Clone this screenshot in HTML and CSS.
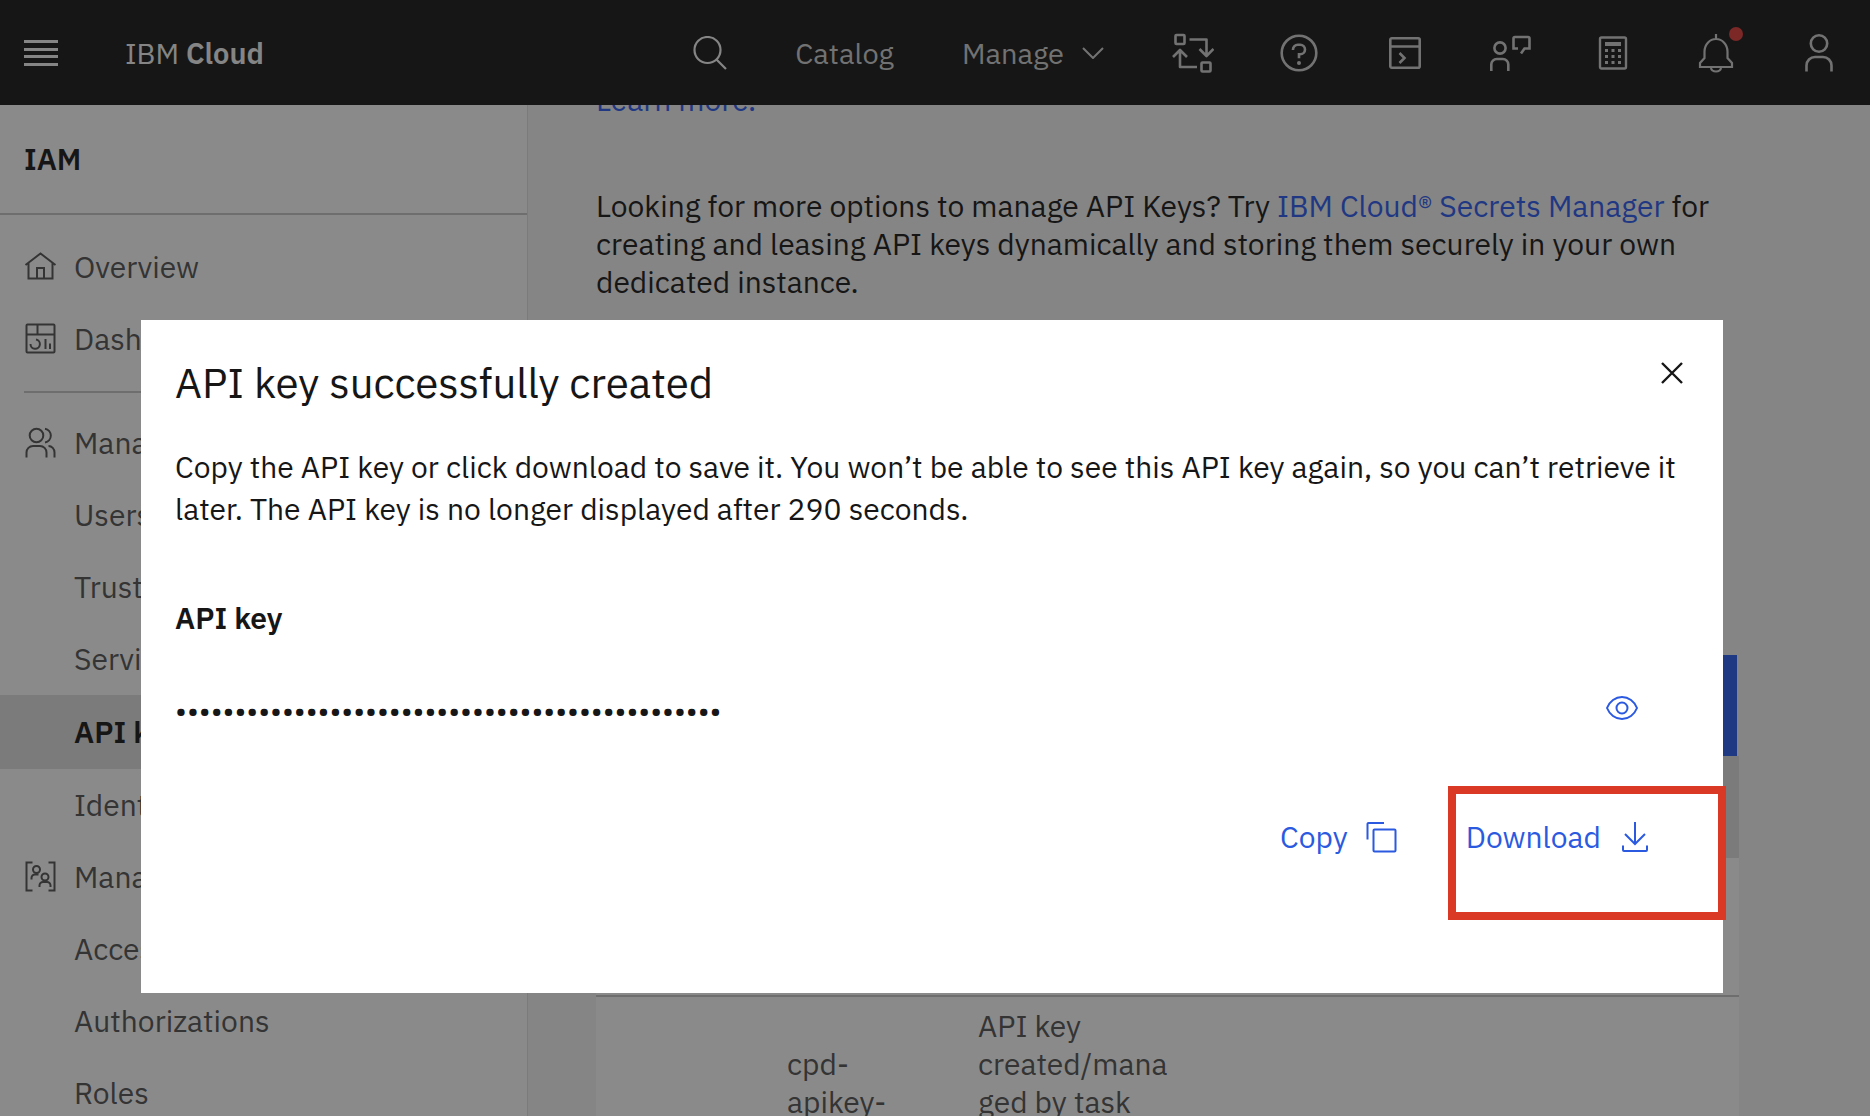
FILE: index.html
```html
<!DOCTYPE html>
<html lang="en">
<head>
  <meta charset="utf-8">
  <meta name="viewport" content="width=device-width, initial-scale=1">
  <title>IBM Cloud - API keys</title>
  <link rel="stylesheet" href="styles.css">
</head>
<body>
  <header class="topbar">
    <button class="menu-button" type="button" aria-label="Menu">
      <svg width="34" height="28" viewBox="0 0 34 28" fill="currentColor"><path d="M0 1h34v3H0zM0 9h34v3H0zM0 16h34v3H0zM0 24h34v3H0z"/></svg>
    </button>
    <a class="brand" href="#">IBM <b>Cloud</b></a>
    <nav class="topnav" aria-label="Main">
      <button class="search-button" type="button" aria-label="Search">
        <svg width="34" height="34" viewBox="0 0 34 34" fill="none" stroke="currentColor" stroke-width="2.200"><circle cx="14.500" cy="14" r="13"/><path d="M23.500 23.500 33 33"/></svg>
      </button>
      <a class="catalog" href="#">Catalog</a>
      <button class="manage" type="button">Manage
        <svg width="22" height="12" viewBox="0 0 22 12" fill="none" stroke="currentColor" stroke-width="2"><path d="M1 1l10 10L21 1"/></svg>
      </button>
    </nav>
    <div class="tools">
      <button class="tool wide" type="button" aria-label="Switch account">
        <svg width="42" height="40" viewBox="0 0 42 40" fill="none" stroke="currentColor" stroke-width="2.600" stroke-linejoin="round"><rect x="3.500" y="2" width="9" height="9" rx="1"/><rect x="29.500" y="29.500" width="9" height="9" rx="1"/><path d="M17.500 6.500h17v16M27.500 16l7 7 7-7M25 34H8V17.500M1 24l7-7 7 7"/></svg>
      </button>
      <button class="tool wide" type="button" aria-label="Help">
        <svg width="38" height="38" viewBox="0 0 38 38" fill="none" stroke="currentColor" stroke-width="2.600"><circle cx="19" cy="19" r="17.300"/><path d="M13 16v-.500a4.800 4.800 0 0 1 4.800-4.800h2.400a4.800 4.800 0 0 1 0 9.600H19v4"/><circle cx="19" cy="29" r="2" fill="currentColor" stroke="none"/></svg>
      </button>
      <button class="tool wide" type="button" aria-label="Cloud Shell">
        <svg width="34" height="34" viewBox="0 0 34 34" fill="none" stroke="currentColor" stroke-width="2.600"><rect x="2.300" y="2.300" width="29.400" height="29.400" rx="1.500"/><path d="M2 10.500h30M11.500 17l5 5-5 5"/></svg>
      </button>
      <button class="tool" type="button" aria-label="Feedback">
        <svg width="42" height="38" viewBox="0 0 42 38" fill="none" stroke="currentColor" stroke-width="2.600"><circle cx="11" cy="14" r="5.600"/><path d="M2.300 37v-6.500a5.500 5.500 0 0 1 5.500-5.500h6a5.500 5.500 0 0 1 5.500 5.500V37M29 14.500h-4.500V4.500a1.500 1.500 0 0 1 1.500-1.500h13a1.500 1.500 0 0 1 1.500 1.500v10h-5l-3.500 5"/></svg>
      </button>
      <button class="tool" type="button" aria-label="Cost estimator">
        <svg width="30" height="34" viewBox="0 0 30 34" fill="none" stroke="currentColor" stroke-width="2.400"><rect x="2" y="1.500" width="26" height="31" rx="1.500"/><path fill="currentColor" stroke="none" d="M7 6h16v4H7zM7 13h3v3H7zM13.500 13h3v3h-3zM20 13h3v3h-3zM7 19h3v3H7zM13.500 19h3v3h-3zM20 19h3v3h-3zM7 25h3v3H7zM13.500 25h3v3h-3zM20 25h3v3h-3z"/></svg>
      </button>
      <button class="tool" type="button" aria-label="Notifications">
        <svg width="36" height="40" viewBox="0 0 36 40" fill="none" stroke="currentColor" stroke-width="2.200"><path d="M18 1v5M6.500 18.500a11.500 12.500 0 0 1 23 0v6.500l4.500 5v4H2v-4l4.500-5zM13 34.500a5 4 0 0 0 10 0"/></svg>
        <span class="unread"></span>
      </button>
      <button class="tool" type="button" aria-label="Profile">
        <svg width="30" height="40" viewBox="0 0 30 40" fill="none" stroke="currentColor" stroke-width="2.600"><circle cx="15" cy="10.500" r="8.200"/><path d="M2.500 38.500v-6a8.500 8.500 0 0 1 8.500-8.500h8a8.500 8.500 0 0 1 8.500 8.500v6"/></svg>
      </button>
    </div>
  </header>

  <div class="shell">
    <aside class="sidebar">
      <h2 class="sidebar-title">IAM</h2>
      <nav class="sidenav" aria-label="IAM">
        <a class="item" href="#">
          <svg class="item-icon" viewBox="0 0 34 34" fill="none" stroke="currentColor" stroke-width="2"><path d="M1.500 15 16.500 3.500l15 11.500M4.500 13v15.500h24V13M13 28.500V18h7v10.500"/></svg>
          Overview</a>
        <a class="item" href="#">
          <svg class="item-icon" viewBox="0 0 34 34" fill="none" stroke="currentColor" stroke-width="2"><rect x="2.500" y="2.500" width="28" height="28" rx="1"/><path d="M2.500 12.500h28M13.500 2.500v10M21.500 17v10M26 21.500v5.500M12 17.500a4.700 4.700 0 1 1-5.500 4.500"/></svg>
          Dashboard</a>
        <hr class="divider">
        <a class="item" href="#">
          <svg class="item-icon" viewBox="0 0 34 34" fill="none" stroke="currentColor" stroke-width="2"><circle cx="12.500" cy="9.500" r="6.800"/><path d="M2.500 31.500v-5a6.500 6.500 0 0 1 6.500-6.500h7a6.500 6.500 0 0 1 6.500 6.500v5M21 2.700a7 7 0 0 1 0 13.800M24.500 20a6 6.500 0 0 1 6 6.500v5"/></svg>
          Manage identities</a>
        <a class="item sub" href="#">Users</a>
        <a class="item sub" href="#">Trusted profiles</a>
        <a class="item sub" href="#">Service IDs</a>
        <a class="item sub current" href="#" aria-current="page">API keys</a>
        <a class="item sub" href="#">Identity providers</a>
        <a class="item" href="#">
          <svg class="item-icon" viewBox="0 0 34 34" fill="none" stroke="currentColor" stroke-width="2"><path d="M8.500 2.500h-6v28h6M24.500 2.500h6v28h-6M7.500 19.500V18a3.500 3.500 0 0 1 3.500-3.500h3.500M15.500 27v-1.500A3.500 3.500 0 0 1 19 22h4a3.500 3.500 0 0 1 3.500 3.500V27"/><circle cx="12.500" cy="9.500" r="3.500"/><circle cx="21" cy="17" r="3.500"/></svg>
          Manage access</a>
        <a class="item sub" href="#">Access groups</a>
        <a class="item sub" href="#">Authorizations</a>
        <a class="item sub" href="#">Roles</a>
      </nav>
    </aside>

    <main class="content">
      <p class="intro"><a href="#">Learn more.</a></p>
      <p class="intro">Looking for more options to manage API Keys? Try <a href="#">IBM Cloud® Secrets Manager</a> for creating and leasing API keys dynamically and storing them securely in your own dedicated instance.</p>
      <div class="toolbar"><button class="create" type="button" aria-label="Create"></button></div>
      <table class="keys">
        <colgroup><col class="col"><col class="col"><col class="col"><col></colgroup>
        <thead><tr><th></th><th></th><th></th><th></th></tr></thead>
        <tbody>
          <tr class="first"><td></td><td></td><td></td><td></td></tr>
          <tr><td></td><td class="name">cpd-<br>apikey-</td><td>API key<br>created/mana<br>ged by task</td><td></td></tr>
        </tbody>
      </table>
    </main>
  </div>

  <div class="overlay">
    <section class="dialog" role="dialog" aria-modal="true" aria-labelledby="dialog-title">
      <div class="dialog-head">
        <h1 class="dialog-title" id="dialog-title">API key successfully created</h1>
        <button class="close" type="button" aria-label="Close">
          <svg width="22" height="22" viewBox="0 0 22 22" fill="none" stroke="currentColor" stroke-width="2.400"><path d="M1 1l20 20M21 1 1 21"/></svg>
        </button>
      </div>
      <p class="dialog-text">Copy the API key or click download to save it. You won’t be able to see this API key again, so you can’t retrieve it later. The API key is no longer displayed after 290 seconds.</p>
      <label class="key-label" for="key">API key</label>
      <div class="key-row">
        <input class="key" id="key" type="password" readonly value="0000000000000000000000000000000000000000000000">
        <button class="show" type="button" aria-label="Show API key">
          <svg width="34" height="26" viewBox="0 0 34 26" fill="none" stroke="currentColor" stroke-width="2"><path d="M2 13C4.500 6.500 10.500 2 17 2s12.500 4.500 15 11c-2.500 6.500-8.500 11-15 11S4.500 19.500 2 13z"/><circle cx="17" cy="13" r="5.500"/></svg>
        </button>
      </div>
      <div class="actions">
        <button class="action" type="button">Copy
          <svg width="32" height="32" viewBox="0 0 32 32" fill="none" stroke="currentColor" stroke-width="2" stroke-linejoin="round"><rect x="7.500" y="8.500" width="22" height="22" rx="1"/><path d="M1.500 18.500V3a1 1 0 0 1 1-1H18"/></svg>
        </button>
        <button class="action highlighted" type="button">Download
          <svg width="32" height="32" viewBox="0 0 32 32" fill="none" stroke="currentColor" stroke-width="2"><path d="M16 1v22M6 13l10 10 10-10M4 24.500V29a1 1 0 0 0 1 1h22a1 1 0 0 0 1-1v-4.500"/></svg>
        </button>
      </div>
    </section>
  </div>
</body>
</html>
```
FILE: styles.css
```css
*,
*::before,
*::after {
  box-sizing: border-box;
}

html,
body {
  height: 100%;
}

body {
  margin: 0;
  display: flex;
  flex-direction: column;
  overflow: hidden;
  color: #161616;
  background: #f4f4f4;
  font: 400 30px/38px "IBM Plex Sans", "Noto Sans", sans-serif;
}

button {
  margin: 0;
  padding: 0;
  border: 0;
  background: none;
  color: inherit;
  font: inherit;
}

a {
  color: inherit;
  text-decoration: none;
}

svg {
  flex: none;
}

/* Top bar */

.topbar {
  position: relative;
  z-index: 1;
  flex: none;
  display: flex;
  align-items: center;
  height: 105px;
  padding-left: 24px;
  color: #cfcfcf;
  background: #161616;
  font-size: 29px;
}

.menu-button,
.search-button,
.manage,
.tool {
  display: flex;
  align-items: center;
  justify-content: center;
}

.menu-button,
.brand,
.search-button {
  color: #f4f4f4;
}

.brand {
  margin-left: 67px;
}

.brand b {
  font-weight: 600;
}

.topnav {
  display: flex;
  align-items: center;
  margin-left: auto;
}

.catalog,
.manage {
  margin-left: 68px;
}

.manage {
  gap: 18px;
}

.tools {
  display: flex;
  margin-left: 36px;
}

.tool {
  position: relative;
  width: 103px;
  height: 105px;
}

.tool.wide {
  width: 106px;
}

.unread {
  position: absolute;
  top: 27px;
  right: 24px;
  width: 14px;
  height: 14px;
  border-radius: 50%;
  background: #e03a38;
}

/* Page */

.shell {
  flex: 1;
  min-height: 0;
  display: flex;
}

.sidebar {
  flex: none;
  width: 528px;
  overflow: hidden;
  border-right: 1px solid #e0e0e0;
  background: #fff;
}

.sidebar-title {
  margin: 0;
  padding: 35px 24px;
  border-bottom: 2px solid #c6c6c6;
  font-size: 30px;
  font-weight: 600;
}

.sidenav {
  padding-top: 16px;
  color: #525252;
}

.item {
  display: flex;
  align-items: center;
  gap: 16px;
  height: 72px;
  padding-left: 24px;
}

.item-icon {
  width: 34px;
  height: 34px;
}

.sub {
  padding-left: 74px;
}

.current {
  height: 74px;
  color: #161616;
  background: #e0e0e0;
  font-weight: 600;
}

.divider {
  height: 2px;
  margin: 16px 24px 14px;
  border: 0;
  background: #c6c6c6;
}

.content {
  flex: 1;
  margin-top: -24px;
  padding: 0 131px 0 68px;
}

.intro {
  margin: 0 0 68px;
}

.intro a {
  color: #2b5af0;
}

.toolbar {
  display: flex;
  justify-content: flex-end;
  padding: 286px 2px 0 0;
}

.create {
  width: 300px;
  height: 101px;
  background: #295ff0;
}

.keys {
  width: 100%;
  border-collapse: collapse;
  table-layout: fixed;
  color: #525252;
  background: #fff;
}

.col {
  width: 191px;
}

.keys th {
  height: 102px;
  background: #e0e0e0;
}

.keys td {
  padding: 10px 0;
  border-bottom: 2px solid #c6c6c6;
  vertical-align: top;
}

.keys .first td {
  height: 138px;
}

.keys .name {
  padding-top: 48px;
}

/* Dialog */

.overlay {
  position: fixed;
  inset: 0;
  z-index: 2;
  display: flex;
  align-items: center;
  padding: 197px 147px 0 141px;
  background: rgba(22, 22, 22, 0.5);
}

.dialog {
  flex: 1;
  padding: 34px 34px 105px;
  background: #fff;
}

.dialog-head {
  display: flex;
  align-items: flex-start;
  justify-content: space-between;
  padding-right: 6px;
}

.dialog-title {
  margin: 0;
  font-size: 42px;
  font-weight: 400;
  line-height: 58px;
}

.close {
  display: flex;
  padding: 8px 0;
}

.dialog-text {
  margin: 34px 0 0;
  line-height: 42px;
}

.key-label {
  display: block;
  margin-top: 69px;
  font-weight: 600;
}

.key-row {
  display: flex;
  align-items: center;
  justify-content: space-between;
  margin-top: 48px;
  padding-right: 50px;
}

.key {
  width: 900px;
  height: 46px;
  padding: 4px 0 0;
  border: 0;
  outline: 0;
  color: #161616;
  background: none;
  font: inherit;
}

.show {
  display: flex;
  color: #2b5ae0;
}

.actions {
  display: flex;
  justify-content: flex-end;
  margin-top: 55px;
  color: #2b5ae0;
}

.action {
  position: relative;
  display: flex;
  align-items: center;
  gap: 18px;
  height: 102px;
  margin-right: 38px;
}

.action + .action {
  margin-left: 30px;
}

.highlighted::after {
  content: "";
  position: absolute;
  inset: 0 -75px -32px -18px;
  border: 8px solid #d93925;
}
```
